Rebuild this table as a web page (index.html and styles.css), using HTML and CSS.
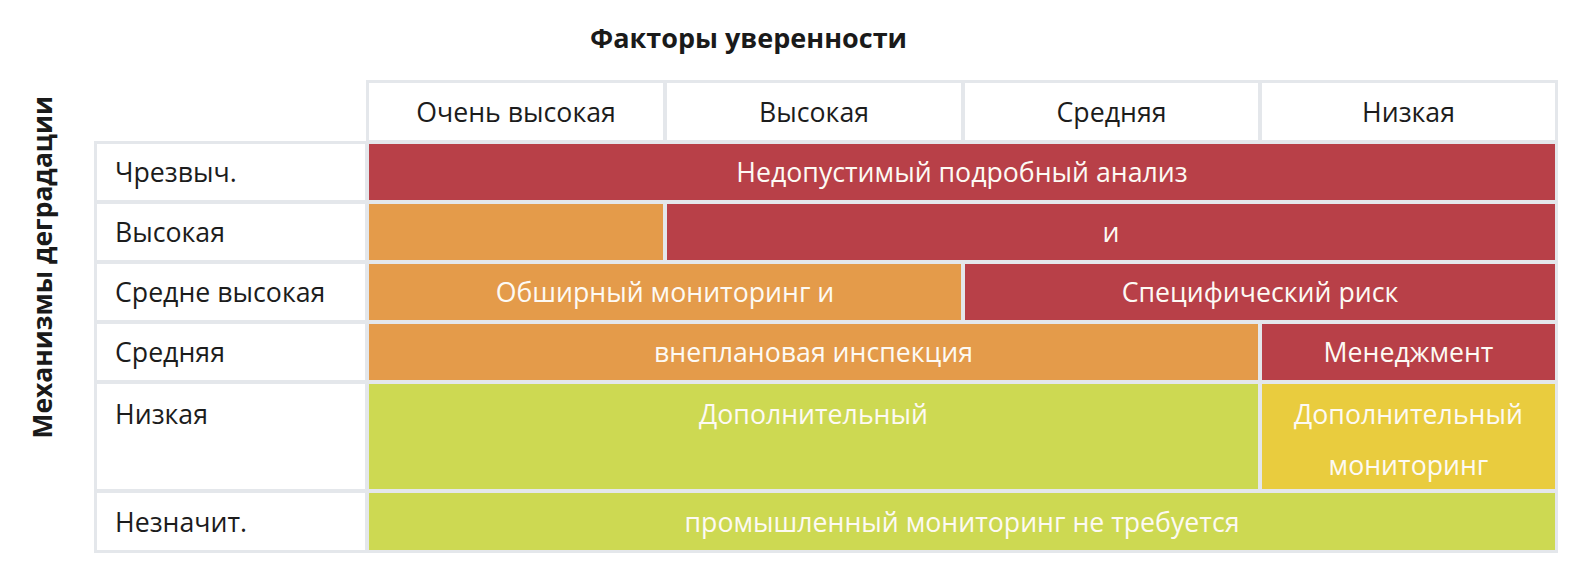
FILE: index.html
```html
<!DOCTYPE html>
<html lang="ru">
<head>
<meta charset="utf-8">
<title>Матрица рисков</title>
<link rel="stylesheet" href="styles.css">
</head>
<body>
<div class="page">
  <div class="side">
    <span class="side-title">Механизмы деградации</span>
  </div>
  <div class="main">
    <h1 class="title">Факторы уверенности</h1>
    <div class="matrix">
      <div class="corner"></div>
      <div class="head">Очень высокая</div>
      <div class="head">Высокая</div>
      <div class="head">Средняя</div>
      <div class="head">Низкая</div>

      <div class="label">Чрезвыч.</div>
      <div class="cell red span4">Недопустимый подробный анализ</div>

      <div class="label">Высокая</div>
      <div class="cell orange"></div>
      <div class="cell red span3">и</div>

      <div class="label">Средне высокая</div>
      <div class="cell orange span2">Обширный мониторинг и</div>
      <div class="cell red span2">Специфический риск</div>

      <div class="label">Средняя</div>
      <div class="cell orange span3">внеплановая инспекция</div>
      <div class="cell red">Менеджмент</div>

      <div class="label tall">Низкая</div>
      <div class="cell green span3 tall">Дополнительный</div>
      <div class="cell yellow tall">Дополнительный<br>мониторинг</div>

      <div class="label">Незначит.</div>
      <div class="cell green span4">промышленный мониторинг не требуется</div>
    </div>
  </div>
</div>
</body>
</html>
```

FILE: styles.css
```css
html, body {
  margin: 0;
  padding: 0;
  background: #ffffff;
}

body {
  font-family: "Open Sans", "Noto Sans", sans-serif;
  color: #1c1c1c;
}

.page {
  display: flex;
  align-items: flex-start;
  padding-bottom: 12px;
}

.side {
  padding: 96px 0 0 25px;
  width: 34px;
  flex: none;
}

.side-title {
  display: block;
  writing-mode: vertical-rl;
  transform: rotate(180deg);
  font-weight: 700;
  font-size: 26.4px;
  line-height: 34px;
  color: #1a1a1a;
  white-space: nowrap;
}

.main {
  flex: none;
}

.title {
  margin: 20px 0 0 531px;
  font-size: 27px;
  line-height: 36px;
  font-weight: 700;
  color: #1a1a1a;
}

.matrix {
  margin: 27px 0 0 38px;
  display: grid;
  grid-template-columns: 268px 294px 294px 293px 293px;
  grid-template-rows: 57px 56px 56px 56px 56px 105px 57px;
  gap: 4px;
  font-size: 26.7px;
}

.corner {
  background: transparent;
}

.head,
.label,
.cell {
  box-shadow: 0 0 0 3px #e4e7eb;
  display: flex;
  align-items: center;
  line-height: 50px;
  white-space: nowrap;
}

.head {
  background: #ffffff;
  justify-content: center;
  color: #1c1c1c;
}

.label {
  background: #ffffff;
  padding-left: 18px;
  color: #1c1c1c;
}

.cell {
  justify-content: center;
  text-align: center;
  color: #fdfaf4;
}

.label.tall,
.cell.tall {
  align-items: flex-start;
  padding-top: 4px;
  line-height: 51px;
}

.span2 { grid-column: span 2; }
.span3 { grid-column: span 3; }
.span4 { grid-column: span 4; }

.red { background: #b84048; }
.orange { background: #e49b4a; }
.green { background: #cdd952; }
.yellow { background: #e9cc3e; }
```
